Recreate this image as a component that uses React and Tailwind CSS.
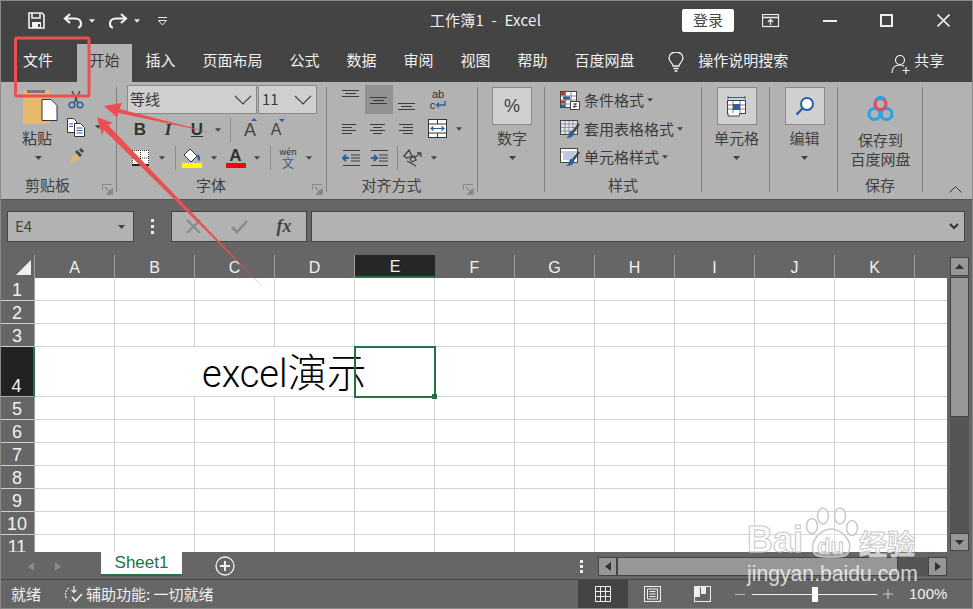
import React from "react";

const F = "font-['Noto_Sans_CJK_SC','Noto_Sans',sans-serif]";

const Caret = ({ c = "#444", w = 7 }) => (
  <svg width={w} height="4" viewBox="0 0 7 4"><polygon points="0,0 7,0 3.5,4" fill={c} /></svg>
);
const Slot = ({ w, children, active }) => (
  <div className={`flex items-center justify-center shrink-0 h-full ${active ? "bg-[#919191]" : ""}`} style={{ width: w }}>{children}</div>
);
const Sep = ({ ml = 0 }) => <div className="w-px h-[24px] bg-[#8c8c8c] shrink-0" style={{ marginLeft: ml }} />;

const Launcher = () => (
  <svg width="11" height="11" viewBox="0 0 11 11" fill="none" stroke="#666">
    <path d="M.5 6V.5H10M.5.5" stroke="#888" />
    <path d="M3 3l6 6M9 5v4H5" />
    <path d="M10.5 4v6.5H4" stroke="#888" />
  </svg>
);

const Group = ({ w, label, launcher, children }) => (
  <div className="flex shrink-0 h-full" style={{ width: w }}>
    <div className="flex-1 flex flex-col min-w-0">
      <div className="h-[89px]">{children}</div>
      <div className={`relative h-[28px] flex items-center justify-center text-[15px] text-[#3f3f3f] ${launcher ? "pr-[21px]" : ""}`}>
        <span>{label}</span>
        {launcher && <div className="absolute right-[3px] top-[13px] flex"><Launcher /></div>}
      </div>
    </div>
    <div className="w-px bg-[#808080] mt-[5px] mb-[7px]" />
  </div>
);

const Lines = ({ kind }) => {
  const spec = {
    top: [[0, 17, 2], [3, 14, 5], [0, 17, 8]],
    mid: [[0, 17, 5], [3, 14, 8], [0, 17, 11]],
    bot: [[0, 17, 7], [3, 14, 10], [0, 17, 13]],
    left: [[0, 14, 3], [0, 10, 6], [0, 14, 9], [0, 10, 12]],
    center: [[0, 15, 3], [3, 12, 6], [0, 15, 9], [3, 12, 12]],
    right: [[1, 15, 3], [5, 15, 6], [1, 15, 9], [5, 15, 12]],
  }[kind];
  return (
    <svg width="18" height="15" viewBox="0 0 18 15" stroke="#3c3c3c">
      {spec.map(([a, b, y]) => <line key={y} x1={a} x2={b} y1={y + 0.5} y2={y + 0.5} />)}
    </svg>
  );
};

const Indent = ({ out }) => (
  <svg width="19" height="16" viewBox="0 0 19 16" fill="none">
    <path d="M1 .5h17M9 5h9M9 8h9M9 11h9M1 15.5h17" stroke="#3c3c3c" />
    {out ? <path d="M7 8H1M4 5L1 8l3 3" stroke="#2b5f9e" strokeWidth="2" /> : <path d="M1 8h6M4 5l3 3-3 3" stroke="#2b5f9e" strokeWidth="2" />}
  </svg>
);

const MiniGrid = ({ variant }) => (
  <svg width="20" height="20" viewBox="0 0 20 20" fill="none">
    {variant === "cond" && (
      <>
        <rect x=".5" y="1.5" width="16" height="16" fill="#fff" stroke="#444" />
        <path d="M5.5 1v17M11 1v17M1 6h16M1 10h16M1 14h16" stroke="#555" strokeWidth=".7" />
        <rect x="1" y="2" width="4" height="3.5" fill="#c0392b" />
        <rect x="3" y="6.5" width="7" height="3" fill="#2b5f9e" />
        <rect x="1" y="10.5" width="4" height="3" fill="#c0392b" />
        <rect x="1" y="14.5" width="4" height="3" fill="#2b5f9e" />
        <rect x="10.5" y="11.5" width="9" height="8" fill="#fff" stroke="#444" />
        <path d="M13 14h4M13 16.5h4M16 13l-2 5" stroke="#222" strokeWidth=".8" />
      </>
    )}
    {variant !== "cond" && (
      <>
        <rect x=".5" y="1.5" width="17" height="14" fill={variant === "table" ? "#dfe6ef" : "#fff"} stroke="#444" />
        {variant === "table" ? (
          <path d="M1 5h17M1 8.5h17M1 12h17M5 2v13M9 2v13M13 2v13" stroke="#777" strokeWidth=".7" />
        ) : (
          <>
            <rect x="3" y="6" width="12" height="7" fill="#b9cbe0" />
            <path d="M1 5h17" stroke="#666" strokeWidth=".7" />
          </>
        )}
        <path d="M19 5l-6 8" stroke="#444" strokeWidth="2.4" />
        <path d="M11 12c2 0 4 1 3 3-1 3-4 4-8 4 2-1 3-3 3-4s1-3 2-3z" fill="#2b5f9e" />
      </>
    )}
  </svg>
);

const Qat = () => (
  <div className="flex items-center h-full">
    <Slot w={28}>
      <svg width="17" height="17" viewBox="0 0 17 17" fill="none" stroke="#f2f2f2" strokeWidth="1.6">
        <path d="M1 1h13l2 2v13H1z" />
        <path d="M4 1v5h8V1" />
        <rect x="4" y="10" width="9" height="6" fill="#f2f2f2" stroke="none" />
        <rect x="10" y="12" width="2" height="3" fill="#444" stroke="none" />
      </svg>
    </Slot>
    <div className="w-[12px]" />
    <Slot w={22}>
      <svg width="20" height="16" viewBox="0 0 20 16" fill="none" stroke="#f2f2f2" strokeWidth="2.2">
        <path d="M7 1L2 5.5 7 10" />
        <path d="M2 5.5h10c4 0 6 2.5 6 5s-1.500 4-3 4" />
      </svg>
    </Slot>
    <Slot w={16}><Caret c="#e8e8e8" w={6} /></Slot>
    <div className="w-[6px]" />
    <Slot w={24}>
      <svg width="20" height="16" viewBox="0 0 20 16" fill="none" stroke="#f2f2f2" strokeWidth="2.2">
        <path d="M13 1l5 4.500L13 10" />
        <path d="M18 5.500H8c-4 0-6 2.500-6 5s1.500 4 3 4" />
      </svg>
    </Slot>
    <Slot w={14}><Caret c="#e8e8e8" w={6} /></Slot>
    <div className="w-[8px]" />
    <Slot w={20}>
      <svg width="11" height="10" viewBox="0 0 11 10" fill="none" stroke="#e8e8e8">
        <path d="M1 1.500h9M1.500 4.500h8L5.500 9z" />
      </svg>
    </Slot>
  </div>
);

const TitleBar = () => (
  <div className="relative h-[41px] bg-[#444] flex items-center pl-[22px] shrink-0">
    <Qat />
    <div className="ml-[246px] w-[135px] text-center text-[15px] tracking-[0.3px] text-[#f0f0f0] whitespace-nowrap">工作簿1&nbsp;&nbsp;-&nbsp;&nbsp;Excel</div>
    <div className="ml-[129px] w-[52px] h-[23px] bg-white rounded-[2px] flex items-center justify-center text-[15px] text-[#444]">登录</div>
    <div className="ml-[28px] flex items-center">
      <svg width="18" height="14" viewBox="0 0 18 14" fill="none" stroke="#eee">
        <rect x=".5" y=".5" width="16" height="12" strokeWidth="1.2" />
        <path d="M1 3.500h15" strokeWidth="1.500" />
        <path d="M8.500 11V6M6 8l2.500-2.500L11 8" strokeWidth="1.300" />
      </svg>
    </div>
    <div className="ml-[43px] w-[14px] h-[2px] bg-[#eee]" />
    <div className="ml-[43px] w-[13px] h-[13px] border-2 border-[#eee]" />
    <svg className="ml-[44px]" width="13" height="13" viewBox="0 0 13 13" stroke="#eee" strokeWidth="1.600">
      <path d="M.5.500l12 12M12.500.500l-12 12" />
    </svg>
  </div>
);

const tabs = ["插入", "页面布局", "公式", "数据", "审阅", "视图", "帮助", "百度网盘"];
const Tabs = () => (
  <div className="h-[41px] bg-[#444] flex items-stretch shrink-0 text-[15px] text-[#f2f2f2] pt-[3px]">
    <div className="ml-[11px] w-[56px] pt-[5px] text-center pr-[2px]">文件</div>
    <div className="ml-[10px] w-[55px] bg-[#b2b2b2] text-[#3a3a3a] pt-[5px] text-center">开始</div>
    {tabs.map((t) => (
      <div key={t} className="px-[13.5px] pt-[5px] whitespace-nowrap">{t}</div>
    ))}
    <div className="ml-[20px] flex items-center pb-[3px]">
      <svg width="16" height="20" viewBox="0 0 16 20" fill="none" stroke="#f0f0f0" strokeWidth="1.300">
        <path d="M5 14c0-3-4-4-4-8a7 6 0 0114 0c0 4-4 5-4 8z" />
        <path d="M5.500 16.500h5M6.500 19h3" />
      </svg>
    </div>
    <div className="ml-[14px] pt-[5px] whitespace-nowrap">操作说明搜索</div>
    <div className="ml-[103px] flex items-start gap-[2px] pt-[10px]">
      <svg width="21" height="21" viewBox="0 0 21 21" fill="none" stroke="#f0f0f0" strokeWidth="1.200">
        <circle cx="9" cy="6" r="4.500" />
        <path d="M1 19c0-5 3-8 8-8 1.500 0 3 .5 4 1.200" />
        <path d="M15 13v7M11.500 16.500h7" />
      </svg>
      <span className="-mt-[5px] text-[#f0f0f0]">共享</span>
    </div>
  </div>
);

const BigBox = ({ children }) => (
  <div className="w-[40px] h-[38px] bg-[#d0d0d0] border border-[#8a8a8a] flex items-center justify-center">{children}</div>
);

const DropGroup = ({ w, box, text, label }) => (
  <Group w={w} label={label}>
    <div className="flex flex-col items-center pt-[5px] pl-[2px]">
      <BigBox>{box}</BigBox>
      <div className="mt-[3px] h-[20px] leading-[20px] text-[15px] text-[#3f3f3f] whitespace-nowrap">{text}</div>
      <div className="mt-[8px] flex"><Caret /></div>
    </div>
  </Group>
);

const Combo = ({ w, children }) => (
  <div className="h-[29px] bg-[#cfcfcf] border border-[#8a8a8a] flex items-center justify-between pl-[2px] pr-[4px] text-[#3a3a3a] text-[15px] shrink-0" style={{ width: w }}>
    <span>{children}</span>
    <svg width="18" height="10" viewBox="0 0 18 10" fill="none" stroke="#444" strokeWidth="1.200"><path d="M1 1l8 8 8-8" /></svg>
  </div>
);

const Row = ({ h, children }) => <div className="flex items-center" style={{ height: h }}>{children}</div>;

const Ribbon = () => (
  <div className="h-[117px] bg-[#b2b2b2] flex shrink-0 text-[#3a3a3a]">
    <Group w={117} label="剪贴板" launcher>
      <div className="flex">
        <div className="w-[60px] pl-[14px] flex flex-col items-center">
          <svg className="mt-[8px] ml-[6px] shrink-0" width="35" height="36" viewBox="0 0 35 36">
            <rect x="0" y="0" width="27" height="34" fill="#e5b96b" />
            <rect x="4" y="0" width="18" height="3" fill="#777" />
            <path d="M19 18.500h9l6 6v15H19z" fill="#fff" stroke="#333" transform="translate(0,-9)" />
          </svg>
          <div className="text-[15px] leading-[20px] mt-[2px] whitespace-nowrap">粘贴</div>
          <div className="mt-[8px] ml-[3px] flex"><Caret /></div>
        </div>
        <div className="flex flex-col pt-[4px] pl-[6px]">
          <Row h={28}>
            <Slot w={20}>
              <svg width="16" height="18" viewBox="0 0 16 18" fill="none">
                <path d="M4 0l6 12M12 0L6 12" stroke="#444" strokeWidth="1.400" />
                <circle cx="4" cy="14" r="2.800" stroke="#2b5f9e" strokeWidth="1.500" />
                <circle cx="12" cy="14" r="2.800" stroke="#2b5f9e" strokeWidth="1.500" />
              </svg>
            </Slot>
          </Row>
          <Row h={26}>
            <Slot w={20}>
              <svg width="18" height="19" viewBox="0 0 18 19">
                <path d="M.5.500h6l3 3v11h-9z" fill="#fff" stroke="#333" />
                <path d="M7.500 5.500h6l4 4v9h-10z" fill="#fff" stroke="#333" />
                <path d="M9.500 10h6M9.500 12.500h6M9.500 15h6" stroke="#2b5f9e" />
                <path d="M2 6h4M2 8.500h4" stroke="#2b5f9e" />
              </svg>
            </Slot>
            <div className="ml-[9px] flex"><Caret w={6} /></div>
          </Row>
          <Row h={30}>
            <Slot w={20}>
              <svg width="18" height="17" viewBox="0 0 18 17">
                <path d="M8 6l5 5-3 2c-2 2-5 3-8 3 2-1 3-3 3-5z" fill="#e5b96b" />
                <path d="M8 5l5 5 2-2-5-5z" fill="#444" />
                <path d="M12 3l2-2 3 3-2 2z" fill="#444" />
              </svg>
            </Slot>
          </Row>
        </div>
      </div>
    </Group>

    <Group w={210} label="字体" launcher>
      <div className="pl-[10px] pt-[3px]">
        <div className="flex gap-[1px] h-[31px]">
          <Combo w={130}>等线</Combo>
          <Combo w={59}><span className="pl-[1px]">11</span></Combo>
        </div>
        <Row h={28}>
          <Slot w={26}><span className="font-bold text-[17px] font-['Liberation_Sans'] text-[#333]">B</span></Slot>
          <Slot w={30}><span className="font-bold italic text-[17px] font-['Liberation_Serif'] text-[#333]">I</span></Slot>
          <Slot w={28}><span className="font-bold underline text-[17px] font-['Liberation_Sans'] text-[#333]">U</span></Slot>
          <Slot w={14}><Caret w={6} /></Slot>
          <Sep ml={5} />
          <Slot w={38}><span className="relative text-[18px] font-['Liberation_Sans'] text-[#444]">A<span className="absolute top-[1px] left-[7px] w-0 h-0 border-x-[3px] border-x-transparent border-b-[3px] border-b-[#2b5f9e]" /></span></Slot>
          <Slot w={14}><span className="relative text-[16px] font-['Liberation_Sans'] text-[#444]">A<span className="absolute top-[1px] left-[8px] w-0 h-0 border-x-[3px] border-x-transparent border-t-[3px] border-t-[#2b5f9e]" /></span></Slot>
        </Row>
        <Row h={27}>
          <Slot w={26}>
            <svg width="17" height="16" viewBox="0 0 17 16" fill="#fff">
              <rect x="0" y="0" width="17" height="16" />
              <path d="M8.500 0v16M0 8h17" stroke="#333" strokeDasharray="1 1" />
              <path d="M.5 0v16M16.500 0v16M0 .5h17" stroke="#333" strokeDasharray="1 1" />
              <path d="M0 15h17" stroke="#222" strokeWidth="2" />
            </svg>
          </Slot>
          <Slot w={18}><Caret w={6} /></Slot>
          <Sep ml={4} />
          <Slot w={31}>
            <div className="flex flex-col items-center">
              <svg width="20" height="15" viewBox="0 0 20 15">
                <path d="M8 1l7 7-6 6-7-7z" fill="#fff" stroke="#333" />
                <path d="M16 6c2 2 3 5 1 7-1-1-2-3-2-5z" fill="#2b5f9e" />
              </svg>
              <div className="w-[20px] h-[5px] bg-[#ffff00]" />
            </div>
          </Slot>
          <Slot w={14}><Caret w={6} /></Slot>
          <Slot w={29}>
            <div className="flex flex-col items-center">
              <span className="font-bold text-[17px] leading-[15px] font-['Liberation_Sans'] text-[#333]">A</span>
              <div className="w-[20px] h-[5px] bg-[#ff0000]" />
            </div>
          </Slot>
          <Slot w={14}><Caret w={6} /></Slot>
          <Sep ml={6} />
          <Slot w={34}>
            <div className="flex flex-col items-center">
              <span className="text-[9px] leading-[10px] text-[#333]">wén</span>
              <span className="text-[12px] leading-[12px] text-[#2b5f9e]">文</span>
            </div>
          </Slot>
          <Slot w={8}><Caret w={6} /></Slot>
        </Row>
      </div>
    </Group>

    <Group w={151} label="对齐方式" launcher>
      <div className="pl-[10px] pt-[3px]">
        <Row h={29}>
          <Slot w={28}><div className="mb-[9px] flex"><Lines kind="top" /></div></Slot>
          <Slot w={28} active><Lines kind="mid" /></Slot>
          <Slot w={28}><div className="mt-[7px] flex"><Lines kind="bot" /></div></Slot>
          <Slot w={34}>
            <div className="flex flex-col items-center leading-[11px] text-[11px] font-['Liberation_Sans'] font-medium text-[#333]">
              <span>ab</span>
              <span className="flex items-center">c<svg width="11" height="8" viewBox="0 0 11 8" fill="none" stroke="#2b5f9e" strokeWidth="1.300"><path d="M10 0v4H2M4 1.500L1.500 4 4 6.500" /></svg></span>
            </div>
          </Slot>
        </Row>
        <Row h={29}>
          <Slot w={28}><Lines kind="left" /></Slot>
          <Slot w={28}><Lines kind="center" /></Slot>
          <Slot w={28}><Lines kind="right" /></Slot>
          <Slot w={32}>
            <svg width="19" height="19" viewBox="0 0 19 19" fill="#fff" stroke="#333">
              <rect x=".5" y=".5" width="18" height="18" />
              <path d="M.5 5h18M.5 14h18M9.500.5V5M9.500 14v4.500" fill="none" />
              <path d="M3 9.500h13M5.500 7.500l-2.500 2 2.500 2M13.500 7.500l2.500 2-2.500 2" fill="none" stroke="#2b5f9e" strokeWidth="1.200" />
            </svg>
          </Slot>
          <Slot w={12}><Caret w={6} /></Slot>
        </Row>
        <Row h={29}>
          <Slot w={28}><Indent out /></Slot>
          <Slot w={28}><Indent /></Slot>
          <Sep ml={4} />
          <Slot w={30}>
            <svg width="20" height="18" viewBox="0 0 20 18" fill="none" stroke="#444" strokeWidth="1.300">
              <path d="M1 7l5-6 3 6-5 2zM7 10l4-3 2 4-4 2z" />
              <path d="M4 12l9 5M11 9l7-5M18 4h-4M18 4v4" />
            </svg>
          </Slot>
          <Slot w={12}><Caret w={6} /></Slot>
        </Row>
      </div>
    </Group>

    <DropGroup w={67} text="数字" box={<span className="text-[18px] text-[#3f3f3f] font-['Liberation_Sans']">%</span>} label="" />

    <Group w={157} label="样式">
      <div className="pl-[15px] pt-[4px] text-[15px]">
        {[["cond", "条件格式"], ["table", "套用表格格式"], ["cell", "单元格样式"]].map(([v, t]) => (
          <div key={v} className="flex items-center h-[28.5px]">
            <div className="w-[21px] flex"><MiniGrid variant={v} /></div>
            <span className="ml-[3px] whitespace-nowrap">{t}</span>
            <div className="ml-[3px] flex"><Caret w={6} /></div>
          </div>
        ))}
      </div>
    </Group>

    <DropGroup w={68} text="单元格" label="" box={
      <svg width="19" height="22" viewBox="0 0 19 22" fill="none" stroke="#444">
        <path d="M1 2.500h17M1 1v3M18 1v3" stroke="#2b5f9e" />
        <rect x=".5" y="5.500" width="18" height="13" fill="#fff" />
        <path d="M6 6v12M13 6v12M1 10h17M1 14h17" strokeWidth=".7" />
        <rect x="6" y="9" width="7" height="6" fill="#2b5f9e" stroke="none" />
        <path d="M1 18v3h11l1-3" fill="#fff" />
      </svg>
    } />
    <DropGroup w={68} text="编辑" label="" box={
      <svg width="20" height="20" viewBox="0 0 20 20" fill="none" stroke="#2b5f9e">
        <circle cx="12" cy="8" r="6" strokeWidth="2" fill="#fff" />
        <path d="M7.500 12.500L1.500 18.500" strokeWidth="2.400" />
      </svg>
    } />

    <Group w={85} label="保存">
      <div className="flex flex-col items-center pt-[14px] pl-[1px]">
        <svg width="27" height="27" viewBox="0 0 27 27" fill="none" strokeWidth="3.200">
          <circle cx="7.500" cy="18" r="5.500" stroke="#2aa3e3" />
          <circle cx="19.500" cy="18" r="5.500" stroke="#2aa3e3" />
          <circle cx="13.500" cy="8" r="5.500" stroke="#e24a5f" />
          <path d="M9 3.800a5.500 5.500 0 019 0" stroke="#2aa3e3" />
        </svg>
        <div className="mt-[7px] text-[15px] leading-[19px] text-center whitespace-nowrap text-[#3f3f3f]">保存到<br />百度网盘</div>
      </div>
    </Group>
    <div className="flex-1 flex items-end justify-end pr-[11px] pb-[6px]">
      <svg width="13" height="7" viewBox="0 0 13 7" fill="none" stroke="#333"><path d="M.5 6.500l6-6 6 6" /></svg>
    </div>
  </div>
);

const FormulaBar = () => (
  <div className="h-[56px] bg-[#666] flex items-center pl-[7px] pr-[8px] shrink-0 pb-[2px] border-t border-[#555]">
    <div className="w-[127px] h-[31px] bg-[#b2b2b2] border border-[#444] flex items-center justify-between pl-[7px] pr-[8px] text-[15px] text-[#444]">
      <span>E4</span>
      <Caret c="#444" />
    </div>
    <div className="w-[37px] flex flex-col items-center gap-[3px]">
      <div className="w-[3px] h-[3px] bg-[#eee]" />
      <div className="w-[3px] h-[3px] bg-[#eee]" />
      <div className="w-[3px] h-[3px] bg-[#eee]" />
    </div>
    <div className="w-[136px] h-[31px] bg-[#b2b2b2] border border-[#444] flex items-center shrink-0">
      <Slot w={43}>
        <svg width="15" height="15" viewBox="0 0 15 15" stroke="#8a8a8a" strokeWidth="2"><path d="M1 1l13 13M14 1L1 14" /></svg>
      </Slot>
      <Slot w={48}>
        <svg width="17" height="14" viewBox="0 0 17 14" fill="none" stroke="#8a8a8a" strokeWidth="2.600"><path d="M1 7l5 5L16 1" /></svg>
      </Slot>
      <Slot w={42}><span className="font-['Liberation_Serif'] italic font-bold text-[18px] text-[#444]">fx</span></Slot>
    </div>
    <div className="ml-[4px] flex-1 h-[31px] bg-[#b2b2b2] border border-[#444] flex items-center justify-end pr-[5px]">
      <svg width="10" height="7" viewBox="0 0 10 7" fill="none" stroke="#333" strokeWidth="2"><path d="M1 1l4 4 4-4" /></svg>
    </div>
  </div>
);

const cols = ["A", "B", "C", "D", "E", "F", "G", "H", "I", "J", "K"];
const rowsH = [23, 23, 23, 50, 23, 23, 23, 23, 23, 23, 23];

const HeaderRow = () => (
  <div className="flex h-[23px] bg-[#666] shrink-0">
    <div className="w-[35px] border-r border-[#a0a0a0] flex items-end justify-end pr-[3px] pb-[3px]">
      <svg width="15" height="15" viewBox="0 0 15 15"><polygon points="15,0 15,15 0,15" fill="#f0f0f0" /></svg>
    </div>
    {cols.map((c) => (
      <div key={c} className={`w-[80px] flex items-center justify-center text-[16px] pt-[2px] font-['Liberation_Sans'] ${c === "E" ? "bg-[#262626] border-b-2 border-[#217346] text-[#f2f2f2]" : "border-r border-[#a0a0a0] text-[#f2f2f2]"}`}>{c}</div>
    ))}
    <div className="w-[32px]" />
  </div>
);

const GridRow = ({ n, h }) => {
  const isFour = n === 4;
  return (
    <div className="flex shrink-0" style={{ height: h }}>
      <div className={`w-[35px] flex items-end justify-center text-[18px] leading-[19px] font-['Liberation_Sans'] text-[#f2f2f2] ${isFour ? "bg-[#222] border-r-2 border-[#217346] border-b border-b-[#aaa]" : "bg-[#666] border-b border-[#cfcfcf] border-r border-r-[#a0a0a0]"}`}>{n}</div>
      {cols.map((c) => {
        const hide = isFour && (c === "B" || c === "C" || c === "D");
        return (
          <div key={c} className={`w-[80px] relative bg-white border-b border-[#d4d4d4] ${hide ? "" : "border-r border-r-[#d4d4d4]"}`}>
            {isFour && c === "C" && (
              <div className="absolute left-[7px] bottom-[-9px] z-10 whitespace-nowrap text-black leading-[50px]">
                <span className="text-[38px] font-light font-['Roboto']">excel</span>
                <span className="text-[39.500px] font-light">演示</span>
              </div>
            )}
            {isFour && c === "E" && (
              <div className="absolute -left-[1px] -top-[1px] w-[82px] h-[52px] border-2 border-[#217346] z-20">
                <div className="absolute -right-[3px] -bottom-[3px] w-[5px] h-[5px] bg-[#217346]" />
              </div>
            )}
          </div>
        );
      })}
      <div className="w-[32px] bg-white border-b border-[#d4d4d4]" />
    </div>
  );
};

const SBtn = ({ w = 19, h = 19, children }) => (
  <div className="bg-[#979797] border border-[#444] flex items-center justify-center shrink-0" style={{ width: w, height: h }}>{children}</div>
);

const VScroll = () => (
  <div className="w-[26px] bg-[#666] flex flex-col pl-[3px] pr-[4px] pt-[2px] pb-[1px] shrink-0">
    <SBtn><svg width="9" height="5"><polygon points="0,5 9,5 4.500,0" fill="#333" /></svg></SBtn>
    <div className="flex-1 flex flex-col bg-[#555] mt-[1px]">
      <div className="h-[140px] bg-[#979797] border border-[#444]" />
    </div>
    <SBtn h={18}><svg width="9" height="5"><polygon points="0,0 9,0 4.500,5" fill="#333" /></svg></SBtn>
  </div>
);

const Sheet = () => (
  <div className="h-[297px] flex shrink-0 overflow-hidden">
    <div className="w-[947px] flex flex-col overflow-hidden">
      <HeaderRow />
      {rowsH.map((h, i) => <GridRow key={i} n={i + 1} h={h} />)}
    </div>
    <VScroll />
  </div>
);

const TabsBar = () => (
  <div className="h-[28px] bg-[#666] flex items-start shrink-0 border-b border-[#444]">
    <div className="w-[101px] h-[24px] flex items-center pl-[28px] gap-[21px] mt-[2px]">
      <svg width="6" height="9"><polygon points="6,0 6,9 0,4.500" fill="#8a8a8a" /></svg>
      <svg width="6" height="9"><polygon points="0,0 0,9 6,4.500" fill="#8a8a8a" /></svg>
    </div>
    <div className="w-[81px] h-[24px] bg-white border-b-2 border-[#217346] flex items-center justify-center text-[17px] text-[#217346] font-['Liberation_Sans']">Sheet1</div>
    <div className="ml-[33px] mt-[4px] flex">
      <svg width="20" height="20" viewBox="0 0 20 20" fill="none" stroke="#f2f2f2">
        <circle cx="10" cy="10" r="9" strokeWidth="1.300" />
        <path d="M10 5v10M5 10h10" strokeWidth="2" />
      </svg>
    </div>
    <div className="ml-[345px] mt-[8px] flex flex-col gap-[2px]">
      <div className="w-[3px] h-[3px] bg-[#eee]" />
      <div className="w-[3px] h-[3px] bg-[#eee]" />
      <div className="w-[3px] h-[3px] bg-[#eee]" />
    </div>
    <div className="ml-[15px] mt-[5px] w-[349px] h-[19px] flex">
      <SBtn><svg width="6" height="9"><polygon points="6,0 6,9 0,4.500" fill="#333" /></svg></SBtn>
      <div className="flex-1 bg-[#555] flex">
        <div className="w-[281px] h-full bg-[#979797] border border-[#444]" />
      </div>
      <SBtn><svg width="6" height="9"><polygon points="0,0 0,9 6,4.500" fill="#333" /></svg></SBtn>
    </div>
  </div>
);

const StatusBar = () => (
  <div className="h-[28px] bg-[#666] flex items-center shrink-0 text-[15px] text-[#f0f0f0]">
    <span className="ml-[11px] w-[53px]">就绪</span>
    <svg width="20" height="18" viewBox="0 0 20 18" fill="none" stroke="#eee" strokeWidth="1.200">
      <path d="M5 3a7.500 7.500 0 00-2 11M6 16h1" strokeDasharray="2 1" />
      <path d="M10 1v6M7.500 5L10 7.500 12.500 5" />
      <path d="M8 12l3.500 4L18 9" strokeWidth="1.800" />
    </svg>
    <span className="ml-[2px] w-[127px] whitespace-nowrap">辅助功能: 一切就绪</span>
    <div className="ml-[365px] w-[50px] h-full bg-[#444] flex items-center justify-center">
      <svg width="16" height="16" viewBox="0 0 16 16" fill="none" stroke="#eee"><path d="M.5.500h15v15H.5zM5.500.500v15M10.500.500v15M.5 5.500h15M.5 10.500h15" /></svg>
    </div>
    <div className="ml-[16px] flex">
      <svg width="17" height="16" viewBox="0 0 17 16" fill="none" stroke="#eee"><rect x=".5" y=".5" width="16" height="15" /><path d="M3.500 3h10v10h-10zM5.500 5.500h6M5.500 8h6M5.500 10.500h6" /></svg>
    </div>
    <div className="ml-[33px] flex">
      <svg width="17" height="16" viewBox="0 0 17 16"><rect x=".5" y=".5" width="16" height="15" fill="none" stroke="#eee" /><rect x="1" y="1" width="5" height="10" fill="#eee" /><rect x="7" y="1" width="5" height="7" fill="#eee" /></svg>
    </div>
    <div className="ml-[24px] w-[10px] h-px bg-[#bbb]" />
    <div className="ml-[7px] w-[125px] h-[1px] bg-[#eee] relative">
      <div className="absolute left-[60px] -top-[7px] w-[6px] h-[15px] bg-white" />
    </div>
    <svg className="ml-[6px]" width="10" height="10" viewBox="0 0 10 10" stroke="#ccc"><path d="M0 5h10M5 0v10" /></svg>
    <span className="ml-[16px] text-[15px] font-['Liberation_Sans']">100%</span>
  </div>
);

const Annotations = () => (
  <svg className="absolute left-0 top-0 pointer-events-none z-30" width="973" height="609" viewBox="0 0 973 609">
    <rect x="15.500" y="38" width="73.500" height="58" rx="1.500" fill="none" stroke="#ec4f4f" strokeWidth="3" />
    <polygon points="104,106 122,103 119.500,109 213,133 118.500,113 117,117.500" fill="#ec4f4f" />
    <polygon points="97,117 113,123 108,125 263,287 104,130 102,135" fill="#ec4f4f" />
  </svg>
);

const stroke = "[-webkit-text-stroke:1px_#c8c8c8]";

const Watermark = () => (
  <div className="absolute left-[745px] top-[505px] w-[180px] h-[85px] pointer-events-none z-30">
    <svg className="absolute left-[60px] top-0" width="60" height="56" viewBox="0 0 60 56" fill="#ffffff" fillOpacity=".35" stroke="#c8c8c8" strokeWidth="1.500">
      <ellipse cx="7" cy="21" rx="5.500" ry="7.500" />
      <ellipse cx="18" cy="11" rx="5.500" ry="8" />
      <ellipse cx="35" cy="11" rx="5.500" ry="8" />
      <ellipse cx="47" cy="23" rx="5.500" ry="7.500" />
      <path d="M8 46c-3-10 8-22 18-22s22 12 18 22c-2 6-8 6-18 6s-16 0-18-6z" />
    </svg>
    <div className={`absolute left-[2px] top-[17px] font-['Liberation_Sans'] font-bold text-[36px] leading-[36px] text-white/70 ${stroke}`}>Bai</div>
    <div className={`absolute left-[72px] top-[30px] font-['Liberation_Sans'] font-bold text-[22px] leading-[24px] text-white/70 ${stroke}`}>du</div>
    <div className={`absolute left-[114px] top-[21px] text-[28px] leading-[34px] font-bold whitespace-nowrap text-white/70 ${stroke}`}>经验</div>
    <div className="absolute left-[2px] top-[56px] text-[21.200px] leading-[26px] font-['Liberation_Sans'] whitespace-nowrap text-white/75">jingyan.baidu.com</div>
  </div>
);

export default function App() {
  return (
    <div className={`relative w-[973px] h-[609px] overflow-hidden flex flex-col bg-[#666] ${F}`}>
      <TitleBar />
      <Tabs />
      <Ribbon />
      <FormulaBar />
      <Sheet />
      <TabsBar />
      <StatusBar />
      <Annotations />
      <Watermark />
      <div className="absolute inset-0 border border-[#8a8a8a] pointer-events-none z-40" />
    </div>
  );
}
